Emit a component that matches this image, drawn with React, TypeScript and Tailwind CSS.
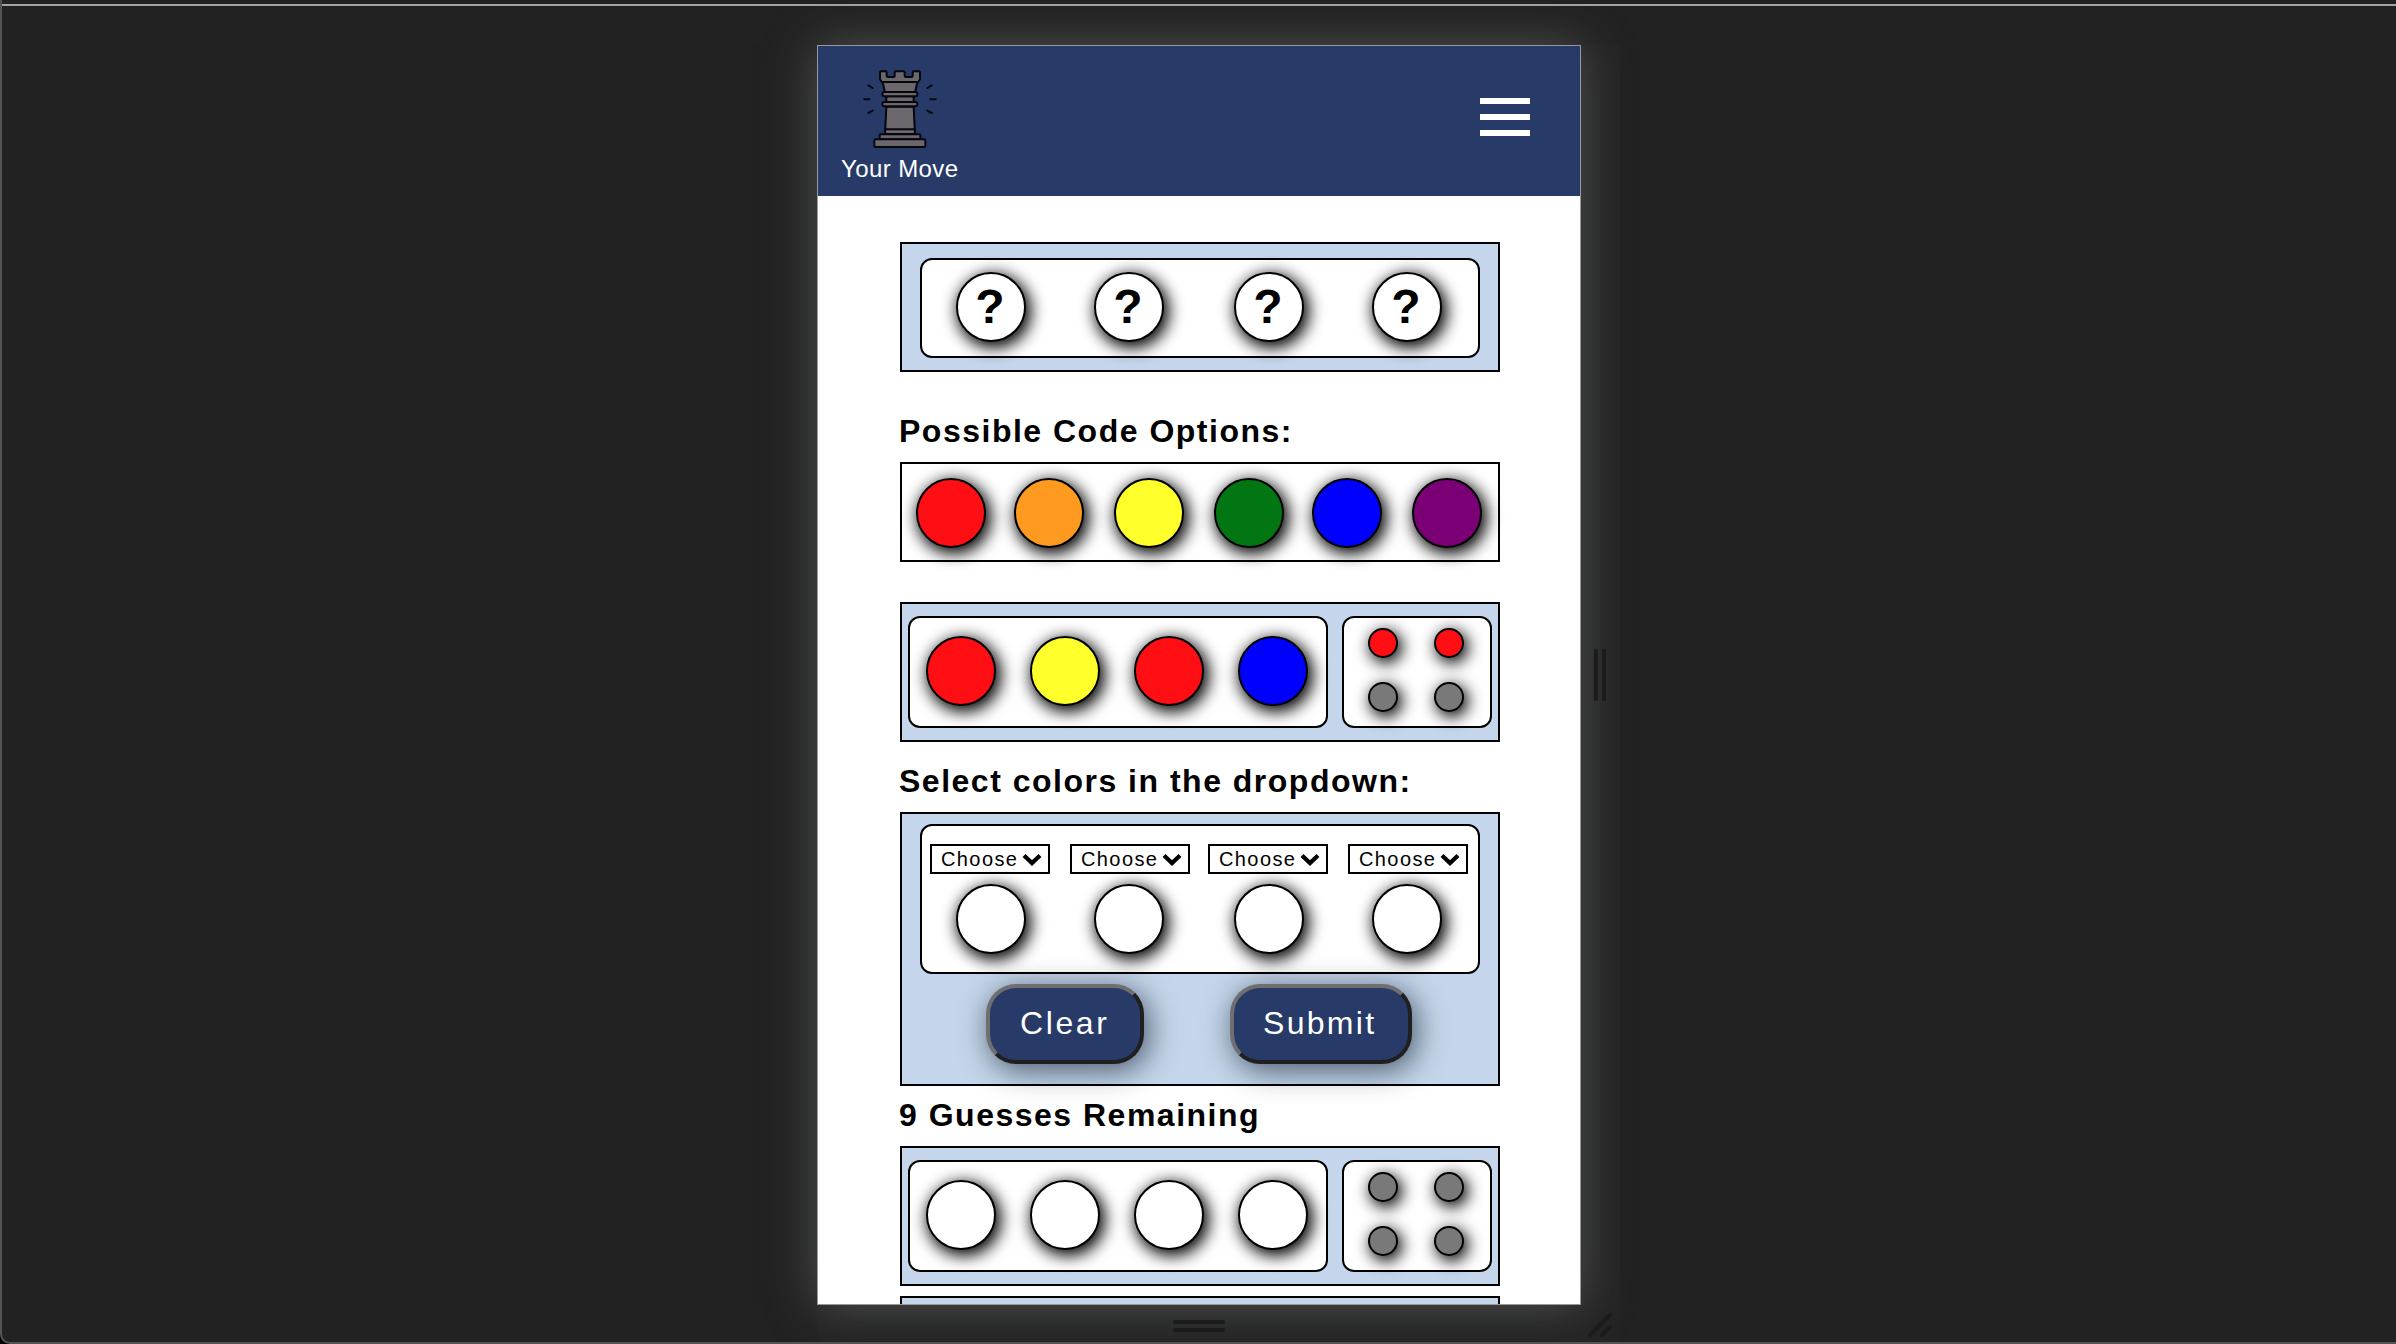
import React from "react";

const FONT = "font-['Liberation_Sans',Arial,sans-serif]";

const FILL: Record<string, string> = {
  white: "bg-white",
  red: "bg-[#ff0f14]",
  orange: "bg-[#ff9a21]",
  yellow: "bg-[#ffff2c]",
  green: "bg-[#017612]",
  blue: "bg-[#0000ff]",
  purple: "bg-[#7b0076]",
  gray: "bg-[#797979]",
};

function Peg({ color = "white", children }: { color?: string; children?: React.ReactNode }) {
  return (
    <div
      className={`${FILL[color]} flex size-[70px] shrink-0 items-center justify-center rounded-full border-2 border-black shadow-[3px_4px_16px_2px_#000]`}
    >
      {children}
    </div>
  );
}

function KeyPeg({ color }: { color: string }) {
  return (
    <div className={`${FILL[color]} size-[30px] rounded-full border-2 border-black shadow-[3px_4px_16px_1px_#000]`} />
  );
}

function Heading({ children, className }: { children: React.ReactNode; className: string }) {
  return (
    <h2 className={`-ml-px mb-[13px] text-[32px] font-bold leading-9 tracking-[1.5px] whitespace-nowrap ${className}`}>{children}</h2>
  );
}

function GuessRow({ pegs, keys, className }: { pegs: string[]; keys: string[]; className?: string }) {
  return (
    <div className={`flex h-[140px] shrink-0 gap-3.5 border-2 border-black bg-[#c5d6ec] px-1.5 py-3 ${className ?? ""}`}>
      <div className="flex h-[112px] w-[420px] gap-[34px] rounded-xl border-2 border-black bg-white px-4 pt-[18px]">
        {pegs.map((c, i) => (
          <Peg key={i} color={c} />
        ))}
      </div>
      <div className="grid h-[112px] w-[150px] grid-cols-[30px_30px] content-start gap-x-9 gap-y-6 rounded-xl border-2 border-black bg-white pt-2.5 pl-6">
        {keys.map((c, i) => (
          <KeyPeg key={i} color={c} />
        ))}
      </div>
    </div>
  );
}

function Choose() {
  return (
    <div className="flex h-[30px] w-[120px] items-center justify-between border-2 border-black bg-white pr-[6px] pl-[9px] text-[20px] leading-6 tracking-[1.4px]">
      <span>Choose</span>
      <svg className="h-[13px] w-5 shrink-0" viewBox="0 0 20 13" fill="none" stroke="#000" strokeWidth="4.2">
        <path d="M2 2.5 L10 10 L18 2.5" />
      </svg>
    </div>
  );
}

function ActionButton({ children, className }: { children: string; className: string }) {
  return (
    <button
      className={`flex h-20 items-center rounded-[30px] border-4 border-t-[#6f6f6f] border-r-[#202020] border-b-[#202020] border-l-[#6f6f6f] bg-[#273a68] pb-[2px] text-[32px] leading-9 text-white shadow-[4px_6px_30px_rgba(0,20,30,0.65)] ${className}`}
    >
      {children}
    </button>
  );
}

function Rook() {
  return (
    <svg
      className="h-[95px] w-20"
      viewBox="0 0 240 285"
      fill="#6c666d"
      stroke="#05070c"
      strokeWidth="6"
      strokeLinejoin="round"
      strokeLinecap="round"
    >
      <path d="M79 140 L75 222 H165 L161 140 Z" />
      <path d="M68 66 H172 L165 98 H75 Z" />
      <path d="M62 34 H76 Q80 34 80 39 V48 Q81 51 84 51 H101 Q104 51 104 48 V39 Q104 34 108 34 H130 Q134 34 134 39 V48 Q134 51 138 51 H154 Q158 51 158 48 V39 Q158 34 162 34 H176 Q180 34 180 39 V58 L175 66 H65 L60 58 V39 Q60 34 62 34 Z" />
      <path d="M79 109 H161 V126 H79 Z" />
      <rect x="67" y="96" width="105" height="13" rx="6" />
      <rect x="67" y="126" width="105" height="13" rx="6" />
      <path d="M75 208 H165" />
      <rect x="59" y="223" width="122" height="15" rx="3" />
      <rect x="43" y="238" width="153" height="23" rx="4" />
      <path d="M25 76 L38 84 M13 118 H28 M25 159 L38 152 M215 76 L202 84 M227 118 H211 M215 159 L202 152" />
    </svg>
  );
}

export default function App() {
  return (
    <div className={`h-[1344px] w-[2396px] overflow-hidden bg-black text-black ${FONT}`}>
      <div className="relative flex h-full flex-col items-start overflow-hidden rounded-bl-[10px] border-b-2 border-l-2 border-[#545454] bg-[#222222]">
        <div className="mt-1 h-0.5 w-full shrink-0 bg-[#a1a4a1]" />
        <div className="mt-[39px] ml-[815px] flex shrink-0">
          <div className="relative h-[1260px] w-[764px] border border-[#97989b] bg-white shadow-[0_0_44px_rgba(110,112,112,0.6)]">
            <div className="flex h-[1258px] flex-col overflow-hidden">
              <header className="flex h-[150px] shrink-0 justify-between bg-[#273a68] pr-[50px] pl-[23px]">
                <div className="flex flex-col items-center pt-3.5">
                  <Rook />
                  <span className="text-[24px] leading-7 tracking-[0.4px] text-white">Your Move</span>
                </div>
                <div className="flex flex-col gap-2.5 pt-[52px]">
                  <div className="h-1.5 w-[50px] bg-white" />
                  <div className="h-1.5 w-[50px] bg-white" />
                  <div className="h-1.5 w-[50px] bg-white" />
                </div>
              </header>

              <main className="ml-[82px] flex w-[600px] flex-1 flex-col pt-[46px]">
                <div className="h-[130px] shrink-0 border-2 border-black bg-[#c5d6ec] px-[18px] py-3.5">
                  <div className="grid h-[100px] grid-cols-[138px_140px_138px_70px] rounded-xl border-2 border-black bg-white pt-3 pl-[34px]">
                    {[0, 1, 2, 3].map((i) => (
                      <Peg key={i}>
                        <span className="pr-0.5 text-[48px] leading-[66px] font-bold">?</span>
                      </Peg>
                    ))}
                  </div>
                </div>

                <Heading className="mt-[41px]">Possible Code Options:</Heading>
                <div className="grid h-[100px] shrink-0 grid-cols-[98px_100px_100px_98px_100px_70px] border-2 border-black bg-white pt-3.5 pl-3.5">
                  {["red", "orange", "yellow", "green", "blue", "purple"].map((c) => (
                    <Peg key={c} color={c} />
                  ))}
                </div>

                <GuessRow
                  className="mt-10"
                  pegs={["red", "yellow", "red", "blue"]}
                  keys={["red", "red", "gray", "gray"]}
                />

                <Heading className="mt-[21px]">Select colors in the dropdown:</Heading>
                <div className="h-[274px] shrink-0 border-2 border-black bg-[#c5d6ec] px-[18px] pt-2.5">
                  <div className="h-[150px] rounded-xl border-2 border-black bg-white pt-[18px]">
                    <div className="grid grid-cols-[140px_138px_140px_120px] pl-2">
                      {[0, 1, 2, 3].map((i) => (
                        <Choose key={i} />
                      ))}
                    </div>
                    <div className="mt-2.5 grid grid-cols-[138px_140px_138px_70px] pl-[34px]">
                      {[0, 1, 2, 3].map((i) => (
                        <Peg key={i} />
                      ))}
                    </div>
                  </div>
                  <div className="mt-2.5 flex gap-[86px] pl-[66px]">
                    <ActionButton className="w-[158px] pl-[30px] tracking-[2.6px]">Clear</ActionButton>
                    <ActionButton className="w-[182px] pl-[29px] tracking-[2.3px]">Submit</ActionButton>
                  </div>
                </div>

                <Heading className="mt-[11px]">9 Guesses Remaining</Heading>
                <GuessRow
                  pegs={["white", "white", "white", "white"]}
                  keys={["gray", "gray", "gray", "gray"]}
                />
                <GuessRow
                  className="mt-2.5"
                  pegs={["white", "white", "white", "white"]}
                  keys={["gray", "gray", "gray", "gray"]}
                />
              </main>
            </div>
          </div>
          <div className="flex h-[1260px] w-[39px] items-center gap-1 bg-white/[0.01] pl-[13px]">
            <div className="relative z-10 h-[52px] w-1 rounded-full bg-[#1b1b1b]" />
            <div className="relative z-10 h-[52px] w-1 rounded-full bg-[#1b1b1b]" />
          </div>
        </div>
        <div className="relative ml-[815px] flex h-[37px] w-[803px] shrink-0 bg-white/[0.01]">
          <div className="flex w-[764px] flex-col items-center gap-1 pt-[15px]">
            <div className="h-1 w-[52px] rounded-full bg-[#1b1b1b]" />
            <div className="h-1 w-[52px] rounded-full bg-[#1b1b1b]" />
          </div>
          <svg className="mt-[7px] ml-[6px] h-[26px] w-[26px]" viewBox="0 0 26 26" stroke="#1b1b1b" strokeWidth="4" strokeLinecap="round">
            <path d="M3 23 L23 3 M15 23 L23 15" />
          </svg>
        </div>
      </div>
    </div>
  );
}
